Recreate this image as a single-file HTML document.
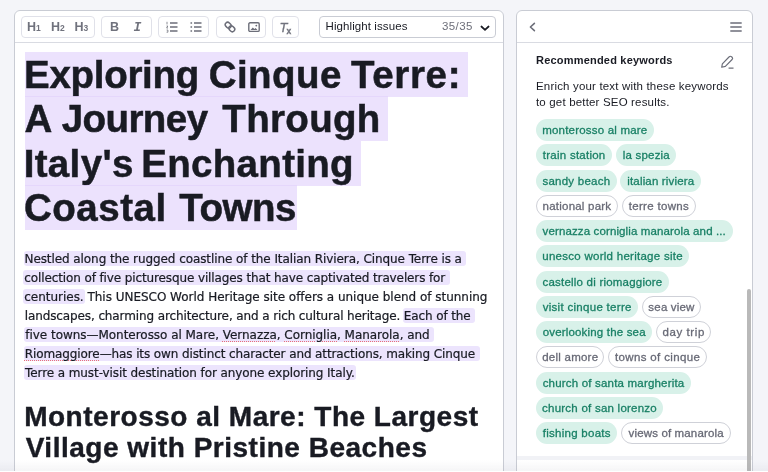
<!DOCTYPE html>
<html lang="en">
<head>
<meta charset="utf-8">
<title>SEO Writing Assistant</title>
<style>
*{box-sizing:border-box}
html,body{margin:0;padding:0}
body{width:768px;height:472px;overflow:hidden;background:#f4f5f9;font-family:"Liberation Sans",sans-serif;color:#191b23;position:relative}
.editor{will-change:transform;position:absolute;left:14px;top:10px;width:490px;height:480px;background:#fff;border:1px solid #c9ccd4;border-radius:6px 6px 0 0;overflow:hidden}
.toolbar{position:absolute;left:0;top:0;right:0;height:32px;border-bottom:1px solid #d9dbe2}
.grp{position:absolute;top:5px;height:21.5px;border:1px solid #e0e1e9;border-radius:4px;background:#fff}
.ic{position:absolute;color:#6c6e79;fill:none;stroke:#6c6e79}
.hb{position:absolute;top:2.5px;font-size:12.5px;font-weight:700;color:#70727d;line-height:15px;letter-spacing:-.2px;white-space:nowrap}
.hb small{font-size:8.5px;font-weight:700;margin-left:.2px;letter-spacing:0}
.sel{position:absolute;left:303.5px;top:5px;width:177.5px;height:21.5px;border:1px solid #c9ccd4;border-radius:4px;font-size:11.5px;line-height:19.5px;white-space:nowrap}
.sel .a{position:absolute;left:6px;top:0;letter-spacing:.09px;color:#191b23}
.sel .b{position:absolute;left:122.5px;top:0;letter-spacing:.4px;color:#6c6e79}
.content{position:absolute;left:0;top:33px;right:0;bottom:0}
h1,h2,p{margin:0;padding:0;position:absolute;left:0;top:0}
h1{font-size:38.5px;font-weight:700;line-height:44px;-webkit-text-stroke:.5px #191b23}
.tl{position:absolute;height:44px;white-space:pre;display:block}
.th{position:absolute;height:45px;background:rgba(225,208,252,.62);display:block}
p{font-family:'DejaVu Sans', 'Liberation Sans', sans-serif;font-size:12px;line-height:19px;-webkit-text-stroke:.22px #191b23}
.pl{position:absolute;height:19px;white-space:pre;display:block}
.hl{background:#ece4fd;padding:.7px 0 .8px;border-radius:0}
.hl.f{border-top-left-radius:3px;border-bottom-left-radius:3px;padding-left:1px;margin-left:-1px}
.hl.l{border-top-right-radius:3px;border-bottom-right-radius:3px;padding-right:1px;margin-right:-1px}
.hl.e{padding-right:4.5px;margin-right:-4.5px}
u{text-decoration:underline dotted #e8707a 1px;text-underline-offset:2px}
h2{font-size:28px;font-weight:700;line-height:30px;-webkit-text-stroke:.4px #191b23}
.h2l{position:absolute;height:30px;white-space:pre;display:block}
.side{will-change:transform;position:absolute;left:516px;top:10px;width:237px;height:480px;background:#fff;border:1px solid #c9ccd4;border-radius:6px 6px 0 0;overflow:hidden}
.shead{position:absolute;left:0;top:0;right:0;height:32px;border-bottom:1px solid #d9dbe2}
.stitle{position:absolute;left:19px;top:42.1px;font-size:11px;font-weight:700;line-height:14px;letter-spacing:.2px;white-space:nowrap}
.sdesc{position:absolute;left:19px;top:66.8px;font-size:11.5px;line-height:16px;white-space:nowrap;letter-spacing:.17px}
.tag{position:absolute;height:22px;border-radius:11px;font-size:11.5px;line-height:23px;text-align:center;white-space:nowrap;background:#d8f1e9;color:#1a8166;font-weight:400;-webkit-text-stroke:.3px #1a8166}
.tag.o{background:#fff;border:1px solid #cfd1d8;color:#686a76;line-height:21px;-webkit-text-stroke:.3px #686a76}
.thumb{position:absolute;left:229.5px;top:277.5px;width:4.5px;height:220px;border-radius:3px;background:#b9b9b9}
.foot{position:absolute;left:0;right:0;top:445px;height:40px;border-top:4.5px solid #f1f2f6;background:#fff}
.fade{position:absolute;left:0;top:460px;width:768px;height:10.5px;background:linear-gradient(rgba(120,120,140,0),rgba(120,120,140,.07))}
.strip{position:absolute;left:0;top:470.5px;width:768px;height:2px;background:#fff}
</style>
</head>
<body>
<div class="editor">
  <div class="toolbar">
    <div class="grp" style="left:5.5px;width:74px">
      <span class="hb" style="left:5.5px">H<small>1</small></span>
      <span class="hb" style="left:29.5px">H<small>2</small></span>
      <span class="hb" style="left:53px">H<small>3</small></span>
    </div>
    <div class="grp" style="left:86px;width:50.5px">
      <span class="hb" style="left:8px;font-size:12.5px">B</span>
      <span class="hb" style="left:31.5px;font-family:'Liberation Mono',monospace;font-style:italic;font-size:13px">I</span>
    </div>
    <div class="grp" style="left:143px;width:51px">
      <svg class="ic" style="left:7px;top:4px" width="12" height="12" viewBox="0 0 12 12"><path d="M4 2h7.5M4 6h7.5M4 10h7.5" stroke-width="1.4"/><path d="M1 .8v2.6M.6 5h1.2L.6 7h1.4M.6 9h1.3v2.2H.6" stroke-width=".8"/></svg>
      <svg class="ic" style="left:31px;top:4px" width="12" height="12" viewBox="0 0 12 12"><path d="M4 2h7.5M4 6h7.5M4 10h7.5" stroke-width="1.4"/><path d="M.5 2h1.6M.5 6h1.6M.5 10h1.6" stroke-width="1.6"/></svg>
    </div>
    <div class="grp" style="left:200.5px;width:50.5px">
      <svg class="ic" style="left:7px;top:4px" width="12" height="12" viewBox="0 0 12 12"><g transform="rotate(45 6 6)" stroke-width="1.5"><rect x=".3" y="3.6" width="6.3" height="4.8" rx="2.4"/><rect x="5.4" y="3.6" width="6.3" height="4.8" rx="2.4"/></g></svg>
      <svg class="ic" style="left:31px;top:4.5px" width="12" height="11" viewBox="0 0 12 11"><rect x=".8" y=".8" width="10.4" height="8.6" rx="1.2" stroke-width="1.4"/><path d="M2.5 8l2.3-2.6 1.6 1.6 1.2-1 1.9 2z" fill="#6c6e79" stroke="none"/><circle cx="8.3" cy="3.6" r=".9" fill="#6c6e79" stroke="none"/></svg>
    </div>
    <div class="grp" style="left:257px;width:27px">
      <span class="hb" style="left:6.5px;font-style:italic;font-weight:400;font-size:13px;letter-spacing:-1.2px;-webkit-text-stroke:.3px #70727d">T<small style="font-style:normal;font-size:8.5px;font-weight:700;position:relative;top:2px">x</small></span>
    </div>
    <div class="sel"><span class="a">Highlight issues</span><span class="b">35/35</span>
      <svg class="ic" style="left:160px;top:7.5px;stroke:#191b23" width="10" height="7" viewBox="0 0 10 7"><path d="M1.4 1.5L5 4.8l3.6-3.3" stroke-width="1.7" stroke-linecap="round" stroke-linejoin="round"/></svg>
    </div>
  </div>
  <div class="content">
    <h1>
<i class="th" style="left:10.0px;top:8.2px;width:443.0px"></i><span class="tl" style="left:9.00px;top:8.91px;letter-spacing:-0.288px">Exploring </span><span class="tl" style="left:193.70px;top:8.91px;letter-spacing:0.460px">Cinque </span><span class="tl" style="left:336.00px;top:8.91px;letter-spacing:0.640px">Terre:</span>
<i class="th" style="left:10.0px;top:52.4px;width:363.3px"></i><span class="tl" style="left:9.50px;top:52.91px;letter-spacing:0.000px">A </span><span class="tl" style="left:46.70px;top:52.91px;letter-spacing:-0.567px">Journey </span><span class="tl" style="left:207.30px;top:52.91px;letter-spacing:0.333px">Through</span>
<i class="th" style="left:10.0px;top:96.7px;width:336.0px"></i><span class="tl" style="left:8.70px;top:97.91px;letter-spacing:0.333px">Italy&#x27;s </span><span class="tl" style="left:126.30px;top:97.91px;letter-spacing:0.300px">Enchanting</span>
<i class="th" style="left:10.0px;top:140.9px;width:272.3px"></i><span class="tl" style="left:9.00px;top:141.91px;letter-spacing:0.500px">Coastal </span><span class="tl" style="left:164.30px;top:141.91px;letter-spacing:-0.500px">Towns</span>
    </h1>
    <p>
<span class="pl" style="left:9.50px;top:205.60px;letter-spacing:-0.080px"><span class="hl f l e">Nestled along the rugged coastline of the Italian Riviera, Cinque Terre is a</span></span>
<span class="pl" style="left:9.30px;top:224.60px;letter-spacing:-0.116px"><span class="hl f l e">collection of five picturesque villages that have captivated travelers for</span></span>
<span class="pl" style="left:9.30px;top:243.60px;letter-spacing:-0.025px"><span class="hl f l">centuries.</span> This UNESCO World Heritage site offers a unique blend of stunning</span>
<span class="pl" style="left:9.80px;top:262.60px;letter-spacing:-0.117px">landscapes, charming architecture, and a rich cultural heritage. <span class="hl f l e">Each of the</span></span>
<span class="pl" style="left:10.30px;top:281.60px;letter-spacing:-0.036px"><span class="hl f">five towns—Monterosso al Mare, </span><span class="hl"><u>Vernazza</u></span><span class="hl">, </span><span class="hl"><u>Corniglia</u></span><span class="hl">, </span><span class="hl"><u>Manarola</u></span><span class="hl l e">, and</span></span>
<span class="pl" style="left:9.80px;top:300.60px;letter-spacing:-0.108px"><span class="hl f"><u>Riomaggiore</u></span><span class="hl l e">—has its own distinct character and attractions, making Cinque</span></span>
<span class="pl" style="left:10.00px;top:319.60px;letter-spacing:-0.088px"><span class="hl f l">Terre a must-visit destination for anyone exploring Italy.</span></span>
    </p>
    <h2>
<span class="h2l" style="left:9.20px;top:357.55px;letter-spacing:0.503px">Monterosso al Mare: The Largest</span>
<span class="h2l" style="left:10.70px;top:388.55px;letter-spacing:0.511px">Village with Pristine Beaches</span>
    </h2>
  </div>
</div>
<div class="side">
  <div class="shead">
    <svg class="ic" style="left:11px;top:11px;stroke:#6c6e79" width="9" height="10" viewBox="0 0 9 10"><path d="M6.4 1.4L2.4 5l4 3.6" stroke-width="1.6" stroke-linecap="round" stroke-linejoin="round"/></svg>
    <svg class="ic" style="left:213px;top:10.5px" width="12" height="10" viewBox="0 0 12 10"><path d="M.3 1h11.4M.3 5h11.4M.3 9h11.4" stroke-width="1.5"/></svg>
  </div>
  <div class="stitle">Recommended keywords</div>
  <svg class="ic" style="left:203px;top:44px" width="15" height="14" viewBox="0 0 14 13"><path d="M2.2 8.2L8.6 1.6a1.5 1.5 0 0 1 2.2 0l.5.5a1.5 1.5 0 0 1 0 2.1L5 10.6l-3.4.8z" stroke-width="1.1" stroke-linejoin="round"/><path d="M8 12.2h4.6" stroke-width="1.1"/></svg>
  <div class="sdesc">Enrich your text with these keywords<br>to get better SEO results.</div>
<span class="tag" style="left:18.8px;top:107.9px;width:117.9px;letter-spacing:0.200px;padding-left:0.200px">monterosso al mare</span>
<span class="tag" style="left:18.8px;top:133.2px;width:76.5px;letter-spacing:0.250px;padding-left:0.250px">train station</span>
<span class="tag" style="left:99.3px;top:133.2px;width:60.0px;letter-spacing:0.188px;padding-left:0.188px">la spezia</span>
<span class="tag" style="left:18.8px;top:158.5px;width:80.9px;letter-spacing:0.240px;padding-left:0.240px">sandy beach</span>
<span class="tag" style="left:103.3px;top:158.5px;width:80.9px;letter-spacing:0.171px;padding-left:0.171px">italian riviera</span>
<span class="tag o" style="left:18.8px;top:183.7px;width:82.1px;letter-spacing:0.217px;padding-left:0.217px">national park</span>
<span class="tag o" style="left:104.5px;top:183.7px;width:74.5px;letter-spacing:0.300px;padding-left:0.300px">terre towns</span>
<span class="tag" style="left:18.8px;top:209.0px;width:196.8px;letter-spacing:0.126px;padding-left:0.126px">vernazza corniglia manarola and ...</span>
<span class="tag" style="left:18.8px;top:234.3px;width:153.3px;letter-spacing:0.272px;padding-left:0.272px">unesco world heritage site</span>
<span class="tag" style="left:18.8px;top:259.6px;width:133.2px;letter-spacing:0.214px;padding-left:0.214px">castello di riomaggiore</span>
<span class="tag" style="left:18.8px;top:284.9px;width:102.5px;letter-spacing:0.294px;padding-left:0.294px">visit cinque terre</span>
<span class="tag o" style="left:124.5px;top:284.9px;width:59.8px;letter-spacing:0.186px;padding-left:0.186px">sea view</span>
<span class="tag" style="left:18.8px;top:310.1px;width:116.7px;letter-spacing:0.178px;padding-left:0.178px">overlooking the sea</span>
<span class="tag o" style="left:139.2px;top:310.1px;width:54.5px;letter-spacing:0.571px;padding-left:0.571px">day trip</span>
<span class="tag o" style="left:18.8px;top:335.4px;width:68.7px;letter-spacing:0.244px;padding-left:0.244px">dell amore</span>
<span class="tag o" style="left:91.2px;top:335.4px;width:98.4px;letter-spacing:0.350px;padding-left:0.350px">towns of cinque</span>
<span class="tag" style="left:18.8px;top:360.7px;width:155.3px;letter-spacing:0.192px;padding-left:0.192px">church of santa margherita</span>
<span class="tag" style="left:18.8px;top:386.0px;width:127.2px;letter-spacing:0.235px;padding-left:0.235px">church of san lorenzo</span>
<span class="tag" style="left:18.8px;top:411.3px;width:81.7px;letter-spacing:0.267px;padding-left:0.267px">fishing boats</span>
<span class="tag o" style="left:104.2px;top:411.3px;width:109.8px;letter-spacing:0.144px;padding-left:0.144px">views of manarola</span>
  <div class="foot"></div>
  <div class="thumb"></div>
</div>
<div class="fade"></div><div class="strip"></div>
</body>
</html>
